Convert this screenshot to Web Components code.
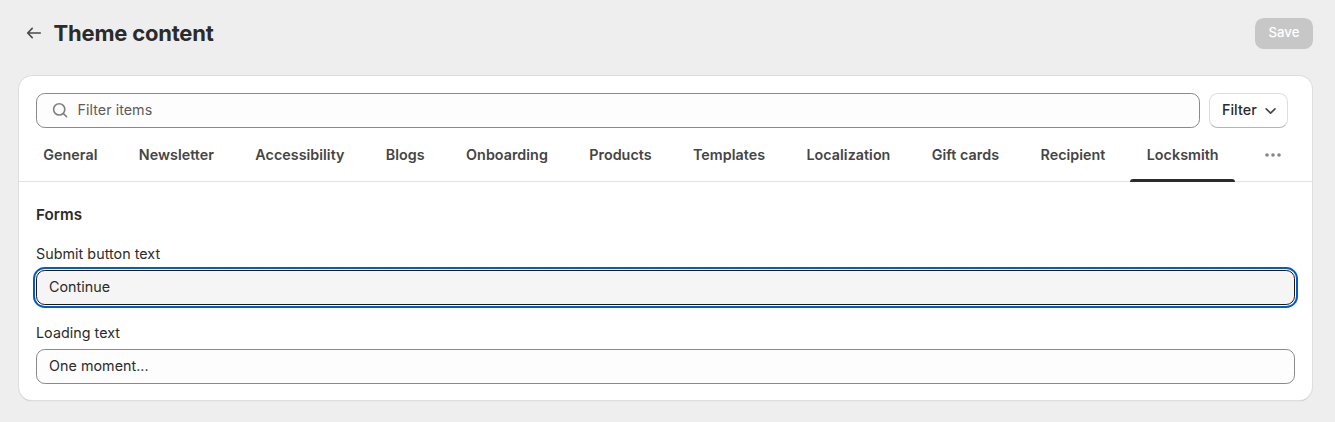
<!DOCTYPE html>
<html lang="en">
<head>
<meta charset="utf-8">
<title>Theme content</title>
<style>
html,body{margin:0;height:100%;overflow:hidden}
body{background:#eee;font-family:Inter,sans-serif;font-size:14.3px;line-height:22px;letter-spacing:.04px;color:#2b2b2b;-webkit-font-smoothing:antialiased}
</style>
</head>
<body>
<content-page>
  <page-header slot="header">Theme content<save-button slot="action">Save</save-button></page-header>
  <content-card>
    <search-field slot="search">Filter items</search-field>
    <filter-button slot="search">Filter</filter-button>
    <tab-item slot="tabs">General</tab-item>
    <tab-item slot="tabs">Newsletter</tab-item>
    <tab-item slot="tabs">Accessibility</tab-item>
    <tab-item slot="tabs">Blogs</tab-item>
    <tab-item slot="tabs">Onboarding</tab-item>
    <tab-item slot="tabs">Products</tab-item>
    <tab-item slot="tabs">Templates</tab-item>
    <tab-item slot="tabs">Localization</tab-item>
    <tab-item slot="tabs">Gift cards</tab-item>
    <tab-item slot="tabs">Recipient</tab-item>
    <tab-item slot="tabs" active>Locksmith</tab-item>
    <more-tabs slot="tabs"></more-tabs>
    <form-section>
      <span slot="title">Forms</span>
      <text-field label="Submit button text" focused>Continue</text-field>
      <text-field label="Loading text">One moment...</text-field>
    </form-section>
  </content-card>
</content-page>
<script>
const define = (name, html) => customElements.define(name, class extends HTMLElement {
  constructor() {
    super();
    this.attachShadow({ mode: 'open' }).innerHTML = html;
  }
  connectedCallback() {
    const label = this.shadowRoot.querySelector('.label');
    if (label) label.textContent = this.getAttribute('label');
  }
});

define('content-page', `<style>
:host{display:block;box-sizing:border-box;padding:18px 22px 0 19px}
</style><slot name="header"></slot><slot></slot>`);

define('page-header', `<style>
:host{display:flex;align-items:center;height:31px;padding-left:5px;margin-bottom:27px}
svg{width:20px;height:20px;flex:none;margin:-1px 9.5px 0 0}
h1{margin:-2px 0 0;font-size:22px;line-height:30px;font-weight:650;letter-spacing:-.2px;flex:1}
</style><svg viewBox="0 0 20 20" fill="none" stroke="#4a4a4a" stroke-width="1.6" stroke-linecap="round" stroke-linejoin="round"><path d="M16.3 10H3.8M8.2 5.4 3.7 10l4.5 4.6"/></svg><h1><slot></slot></h1><slot name="action"></slot>`);

define('save-button', `<style>
:host{display:flex;justify-content:center;box-sizing:border-box;width:58px;height:31px;padding-top:3px;border-radius:8.8px;background:#c7c7c7;color:#fff;font-size:13.2px;font-weight:550;line-height:22px}
</style><slot></slot>`);

define('content-card', `<style>
:host{display:block;box-sizing:border-box;width:1293px;height:324px;border-radius:13.2px;background:#fff;box-shadow:0 0 0 1px #dedede,0 1px 1px #b5b5b5}
.search{display:flex;gap:9px;padding:17px 24px 0 17px}
.tabs{display:flex;gap:8.35px;height:53px;padding:0 24px 0 7.8px;border-bottom:1px solid #e3e3e3}
</style><div class="search"><slot name="search"></slot></div><div class="tabs"><slot name="tabs"></slot></div><slot></slot>`);

define('search-field', `<style>
:host{display:flex;flex:1;box-sizing:border-box;height:35px;padding:4.5px 12px;border:1px solid #8a8a8a;border-radius:8.8px;background:#fdfdfd;color:#5c5c5c}
svg{width:22px;height:22px;margin-right:6.5px}
</style><svg viewBox="0 0 22 22" fill="none" stroke="#808080" stroke-width="1.6" stroke-linecap="round"><circle cx="10.2" cy="10.4" r="5.6"/><path d="m14.4 14.6 3.2 3.2"/></svg><slot></slot>`);

define('filter-button', `<style>
:host{display:flex;box-sizing:border-box;width:79px;height:35px;padding:4.5px 0 0 12px;border:1px solid #dcdcdc;border-bottom-color:#b5b5b5;border-radius:8.8px;background:#fff;font-weight:550}
svg{width:14px;height:14px;margin:4px 0 0 7px}
</style><slot></slot><svg viewBox="0 0 14 14" fill="none" stroke="#4a4a4a" stroke-width="1.7" stroke-linecap="round" stroke-linejoin="round"><path d="M2.2 5.8 6.6 10.1 11 5.8"/></svg>`);

define('tab-item', `<style>
:host{display:flex;flex-direction:column;justify-content:space-between;box-sizing:border-box;height:54px;padding-top:16px;color:#454545;font-weight:600;white-space:nowrap}
.text{padding:0 16.5px}
.line{height:3px;border-radius:3px 3px 0 0}
:host([active]) .line{background:#2b2b2b}
</style><span class="text"><slot></slot></span><span class="line"></span>`);

define('more-tabs', `<style>
:host{display:block;margin:18px 0 0 18.5px}
svg{display:block;width:22px;height:20px}
</style><svg viewBox="0 0 22 20" fill="#868686"><circle cx="5" cy="9" r="1.8"/><circle cx="11" cy="9" r="1.8"/><circle cx="17" cy="9" r="1.8"/></svg>`);

define('form-section', `<style>
:host{display:block;padding:22px 17px 0}
h2{margin:0 0 17px;font-size:15.2px;line-height:22px;font-weight:630}
</style><h2><slot name="title"></slot></h2><slot></slot>`);

define('text-field', `<style>
:host{display:block;height:79px}
.label{height:27px}
.box{box-sizing:border-box;height:35px;padding:4.5px 12px;border:1px solid #8a8a8a;border-radius:8.8px;background:#fdfdfd}
:host([focused]) .box{background:#f5f5f5;border-color:#1a1a1a;outline:2px solid #005bd3;outline-offset:1px}
</style><div class="label"></div><div class="box"><slot></slot></div>`);
</script>
</body>
</html>
